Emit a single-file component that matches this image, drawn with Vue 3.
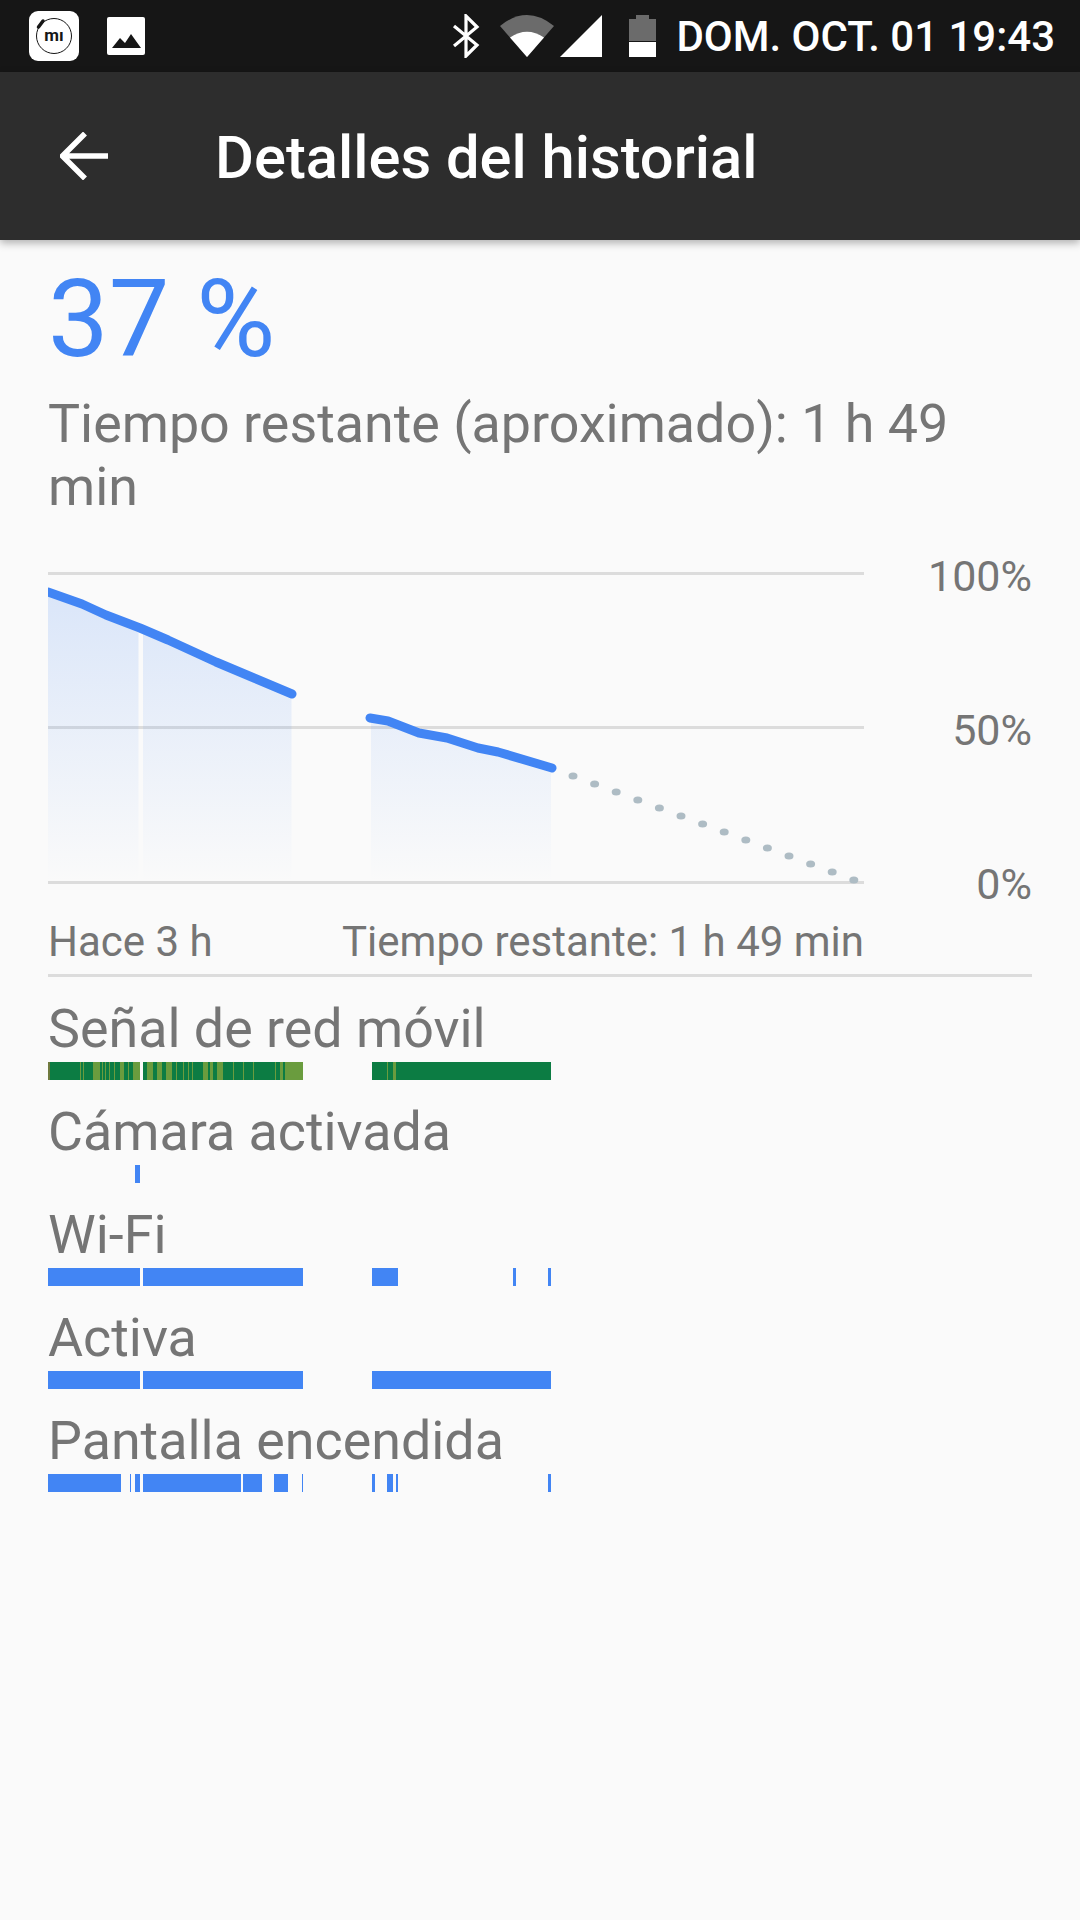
<script setup>
const BLUE = "#4285f4";
const GREEN = "#0c7c43";
const LIME = "#6a9c3e";

// x ranges are in page pixels, the bar row starts at x = 48
const toSegs = (ranges) => {
  let last = 48;
  return ranges.map(([from, to, color]) => {
    const seg = { gap: from - last, width: to - from, color: color || BLUE };
    last = to;
    return seg;
  });
};

const limeStripes = [
  [80, 81], [83, 84], [93, 100], [102, 103], [105, 106], [109, 110], [114, 115],
  [120, 124], [128, 129], [133, 140], [147, 153], [157, 162], [166, 172],
  [176, 177], [183, 184], [188, 189], [192, 193], [203, 208], [210, 213],
  [217, 223], [233, 234], [243, 244], [253, 254], [275, 276], [280, 283], [285, 303],
  [387, 388], [393, 396],
];

const signalRanges = () => {
  const out = [[48, 50, "#6f7a3e"]];
  let pos = 50;
  limeStripes.forEach(([from, to]) => {
    // white gap between the two runs of the first block, blank gap before the second block
    if (from > pos) {
      if (pos <= 303 && from > 303) {
        out.push([372, from, GREEN]);
      } else if (pos <= 140 && from >= 143) {
        out.push([143, from, GREEN]);
      } else {
        out.push([pos, from, GREEN]);
      }
    }
    out.push([from, to, LIME]);
    pos = to;
  });
  out.push([pos, 551, GREEN]);
  return out;
};

const rows = [
  { label: "Señal de red móvil", segs: toSegs(signalRanges()) },
  { label: "Cámara activada", segs: toSegs([[135, 140]]) },
  { label: "Wi-Fi", segs: toSegs([[48, 140], [143, 303], [372, 398], [513, 516], [548, 551]]) },
  { label: "Activa", segs: toSegs([[48, 140], [143, 303], [372, 551]]) },
  {
    label: "Pantalla encendida",
    segs: toSegs([
      [48, 121], [130, 131], [135, 140], [143, 241], [243, 262], [274, 288],
      [302, 303], [372, 375], [387, 393], [396, 398], [548, 551],
    ]),
  },
];

// chart canvas: x is page x - 48, y is page y - 560
const lineA = "M0 32L34 44L58 55L92 68L120 80L168 102L206 118L244 134";
const lineB = "M322 158L340 161L371 173L399 178L430 188L450 192L504 208";

// projection dots run from the last reading down to 0 %
const dots = Array.from({ length: 14 }, (_, i) => ({
  x: 525 + i * 21.6,
  y: 216 + i * 8,
}));
</script>

<template>
  <div class="screen">
    <div class="status">
      <svg class="mi" viewBox="0 0 50 50" width="50" height="50">
        <rect width="50" height="50" rx="9" fill="#fff" />
        <circle cx="25" cy="25" r="17.500" fill="none" stroke="#161616" stroke-width="1" />
        <path d="M9.500 16L14 10" stroke="#161616" stroke-width="3.500" stroke-linecap="round" />
        <text x="25" y="30" text-anchor="middle" class="mi-text">mı</text>
      </svg>
      <svg class="pic" viewBox="0 0 38 38" width="38" height="38">
        <rect width="38" height="38" rx="2" fill="#fff" />
        <path d="M5 31L13 21L18 26L24 17L34 31Z" fill="#161616" />
      </svg>
      <div class="status-right">
        <svg viewBox="0 0 28 44" width="28" height="44">
          <path d="M2 12L25 31L14 42V2L25 13L2 32" fill="none" stroke="#fff" stroke-width="3.200" />
        </svg>
        <svg class="wifi" viewBox="0 0 54 42" width="54" height="42">
          <path d="M0 11Q27 -11 54 11L27 42Z" fill="#6b6b6b" />
          <path d="M10 22.500Q27 11 44 22.500L27 42Z" fill="#fff" />
        </svg>
        <svg class="cell" viewBox="0 0 42 42" width="42" height="42">
          <path d="M0 42L42 0V42Z" fill="#fff" />
        </svg>
        <svg class="batt" viewBox="0 0 27 42" width="27" height="42">
          <path d="M7 0H20V4H27V26H0V4H7Z" fill="#6b6b6b" />
          <rect y="27" width="27" height="15" fill="#fff" />
        </svg>
        <span class="clock">DOM. OCT. 01 19:43</span>
      </div>
    </div>

    <div class="toolbar">
      <svg class="back" viewBox="0 0 48 48" width="48" height="48">
        <path d="M48 24H3M25 1.500L2.500 24L25 46.500" fill="none" stroke="#fff" stroke-width="5.500" />
      </svg>
      <h1 class="title">Detalles del historial</h1>
    </div>

    <div class="content">
      <div class="percent">37 %</div>
      <div class="remaining">Tiempo restante (aproximado): 1 h 49 min</div>

      <div class="chart-row">
        <svg class="chart" viewBox="0 0 816 330" width="816" height="330">
          <defs>
            <linearGradient id="area" gradientUnits="userSpaceOnUse" x1="0" y1="20" x2="0" y2="322">
              <stop offset="0" stop-color="#4285f4" stop-opacity="0.18" />
              <stop offset="1" stop-color="#4285f4" stop-opacity="0" />
            </linearGradient>
          </defs>
          <path d="M0 13.500H816M0 167.500H816M0 322.500H816" stroke="#dcdcdc" stroke-width="3" fill="none" />
          <path d="M0 32L34 44L58 55L90.500 68V322H0Z" fill="url(#area)" />
          <path d="M95 70L120 80L168 102L206 118L243.500 134V322H95Z" fill="url(#area)" />
          <path d="M323 158L340 161L371 173L399 178L430 188L450 192L503 208V322H323Z" fill="url(#area)" />
          <path :d="lineA" fill="none" :stroke="BLUE" stroke-width="9" stroke-linecap="round" stroke-linejoin="round" />
          <path :d="lineB" fill="none" :stroke="BLUE" stroke-width="9" stroke-linecap="round" stroke-linejoin="round" />
          <ellipse v-for="d in dots" :key="d.x" :cx="d.x" :cy="d.y" rx="4.500" ry="3.500" fill="#aebcc4" />
        </svg>
        <div class="axis">
          <span>100%</span>
          <span>50%</span>
          <span>0%</span>
        </div>
      </div>

      <div class="times">
        <span>Hace 3 h</span>
        <span>Tiempo restante: 1 h 49 min</span>
      </div>

      <div class="rows">
        <div v-for="row in rows" :key="row.label" class="row">
          <div class="row-label">{{ row.label }}</div>
          <div class="bar">
            <i
              v-for="(seg, i) in row.segs"
              :key="i"
              :style="{ marginLeft: seg.gap + 'px', width: seg.width + 'px', background: seg.color }"
            ></i>
          </div>
        </div>
      </div>
    </div>
  </div>
</template>

<style>
body {
  background: #fafafa;
}
</style>

<style scoped>
.screen {
  width: 1080px;
  height: 1920px;
  background: #fafafa;
  font-family: Roboto, "Liberation Sans", sans-serif;
  color: #757575;
  overflow: hidden;
}

.status {
  height: 72px;
  background: #161616;
  display: flex;
  align-items: center;
  padding: 0 25px 0 29px;
}

.mi-text {
  font: 700 17px Roboto, sans-serif;
  fill: #161616;
}

.pic {
  margin-left: 28px;
}

.status-right {
  margin-left: auto;
  display: flex;
  align-items: center;
}

.wifi {
  margin-left: 20px;
}

.cell {
  margin-left: 6px;
}

.batt {
  margin-left: 27px;
}

.clock {
  margin-left: 20px;
  color: #fff;
  font-size: 42px;
  font-weight: 500;
  white-space: nowrap;
}

.toolbar {
  height: 168px;
  box-sizing: border-box;
  background: #2d2d2d;
  display: flex;
  align-items: center;
  padding-left: 60px;
  box-shadow: 0 3px 8px rgba(0, 0, 0, 0.3);
  position: relative;
}

.title {
  margin: 3px 0 0 107px;
  color: #fff;
  font-size: 59.700px;
  font-weight: 500;
  white-space: nowrap;
}

.content {
  padding: 0 48px;
}

.percent {
  margin-top: 18px;
  font-size: 108px;
  line-height: 122px;
  color: #4285f4;
}

.remaining {
  margin-top: 12px;
  font-size: 53.800px;
  line-height: 63px;
  width: 930px;
}

.chart-row {
  display: flex;
  height: 330px;
  margin-top: 42px;
}

.chart {
  display: block;
  flex: none;
}

.axis {
  flex: 1;
  height: 356px;
  margin-top: -8px;
  display: flex;
  flex-direction: column;
  justify-content: space-between;
  align-items: flex-end;
  font-size: 43px;
  line-height: 48px;
}

.times {
  width: 816px;
  display: flex;
  justify-content: space-between;
  font-size: 42px;
  line-height: 48px;
  margin-top: 28px;
}

.rows {
  margin-top: 8px;
  border-top: 3px solid #dcdcdc;
}

.row {
  height: 103px;
}

.row-label {
  font-size: 53.800px;
  line-height: 61px;
  padding-top: 21px;
  height: 85px;
  box-sizing: border-box;
  white-space: nowrap;
}

.bar {
  display: flex;
  height: 18px;
}

.bar i {
  display: block;
  flex: none;
}
</style>
